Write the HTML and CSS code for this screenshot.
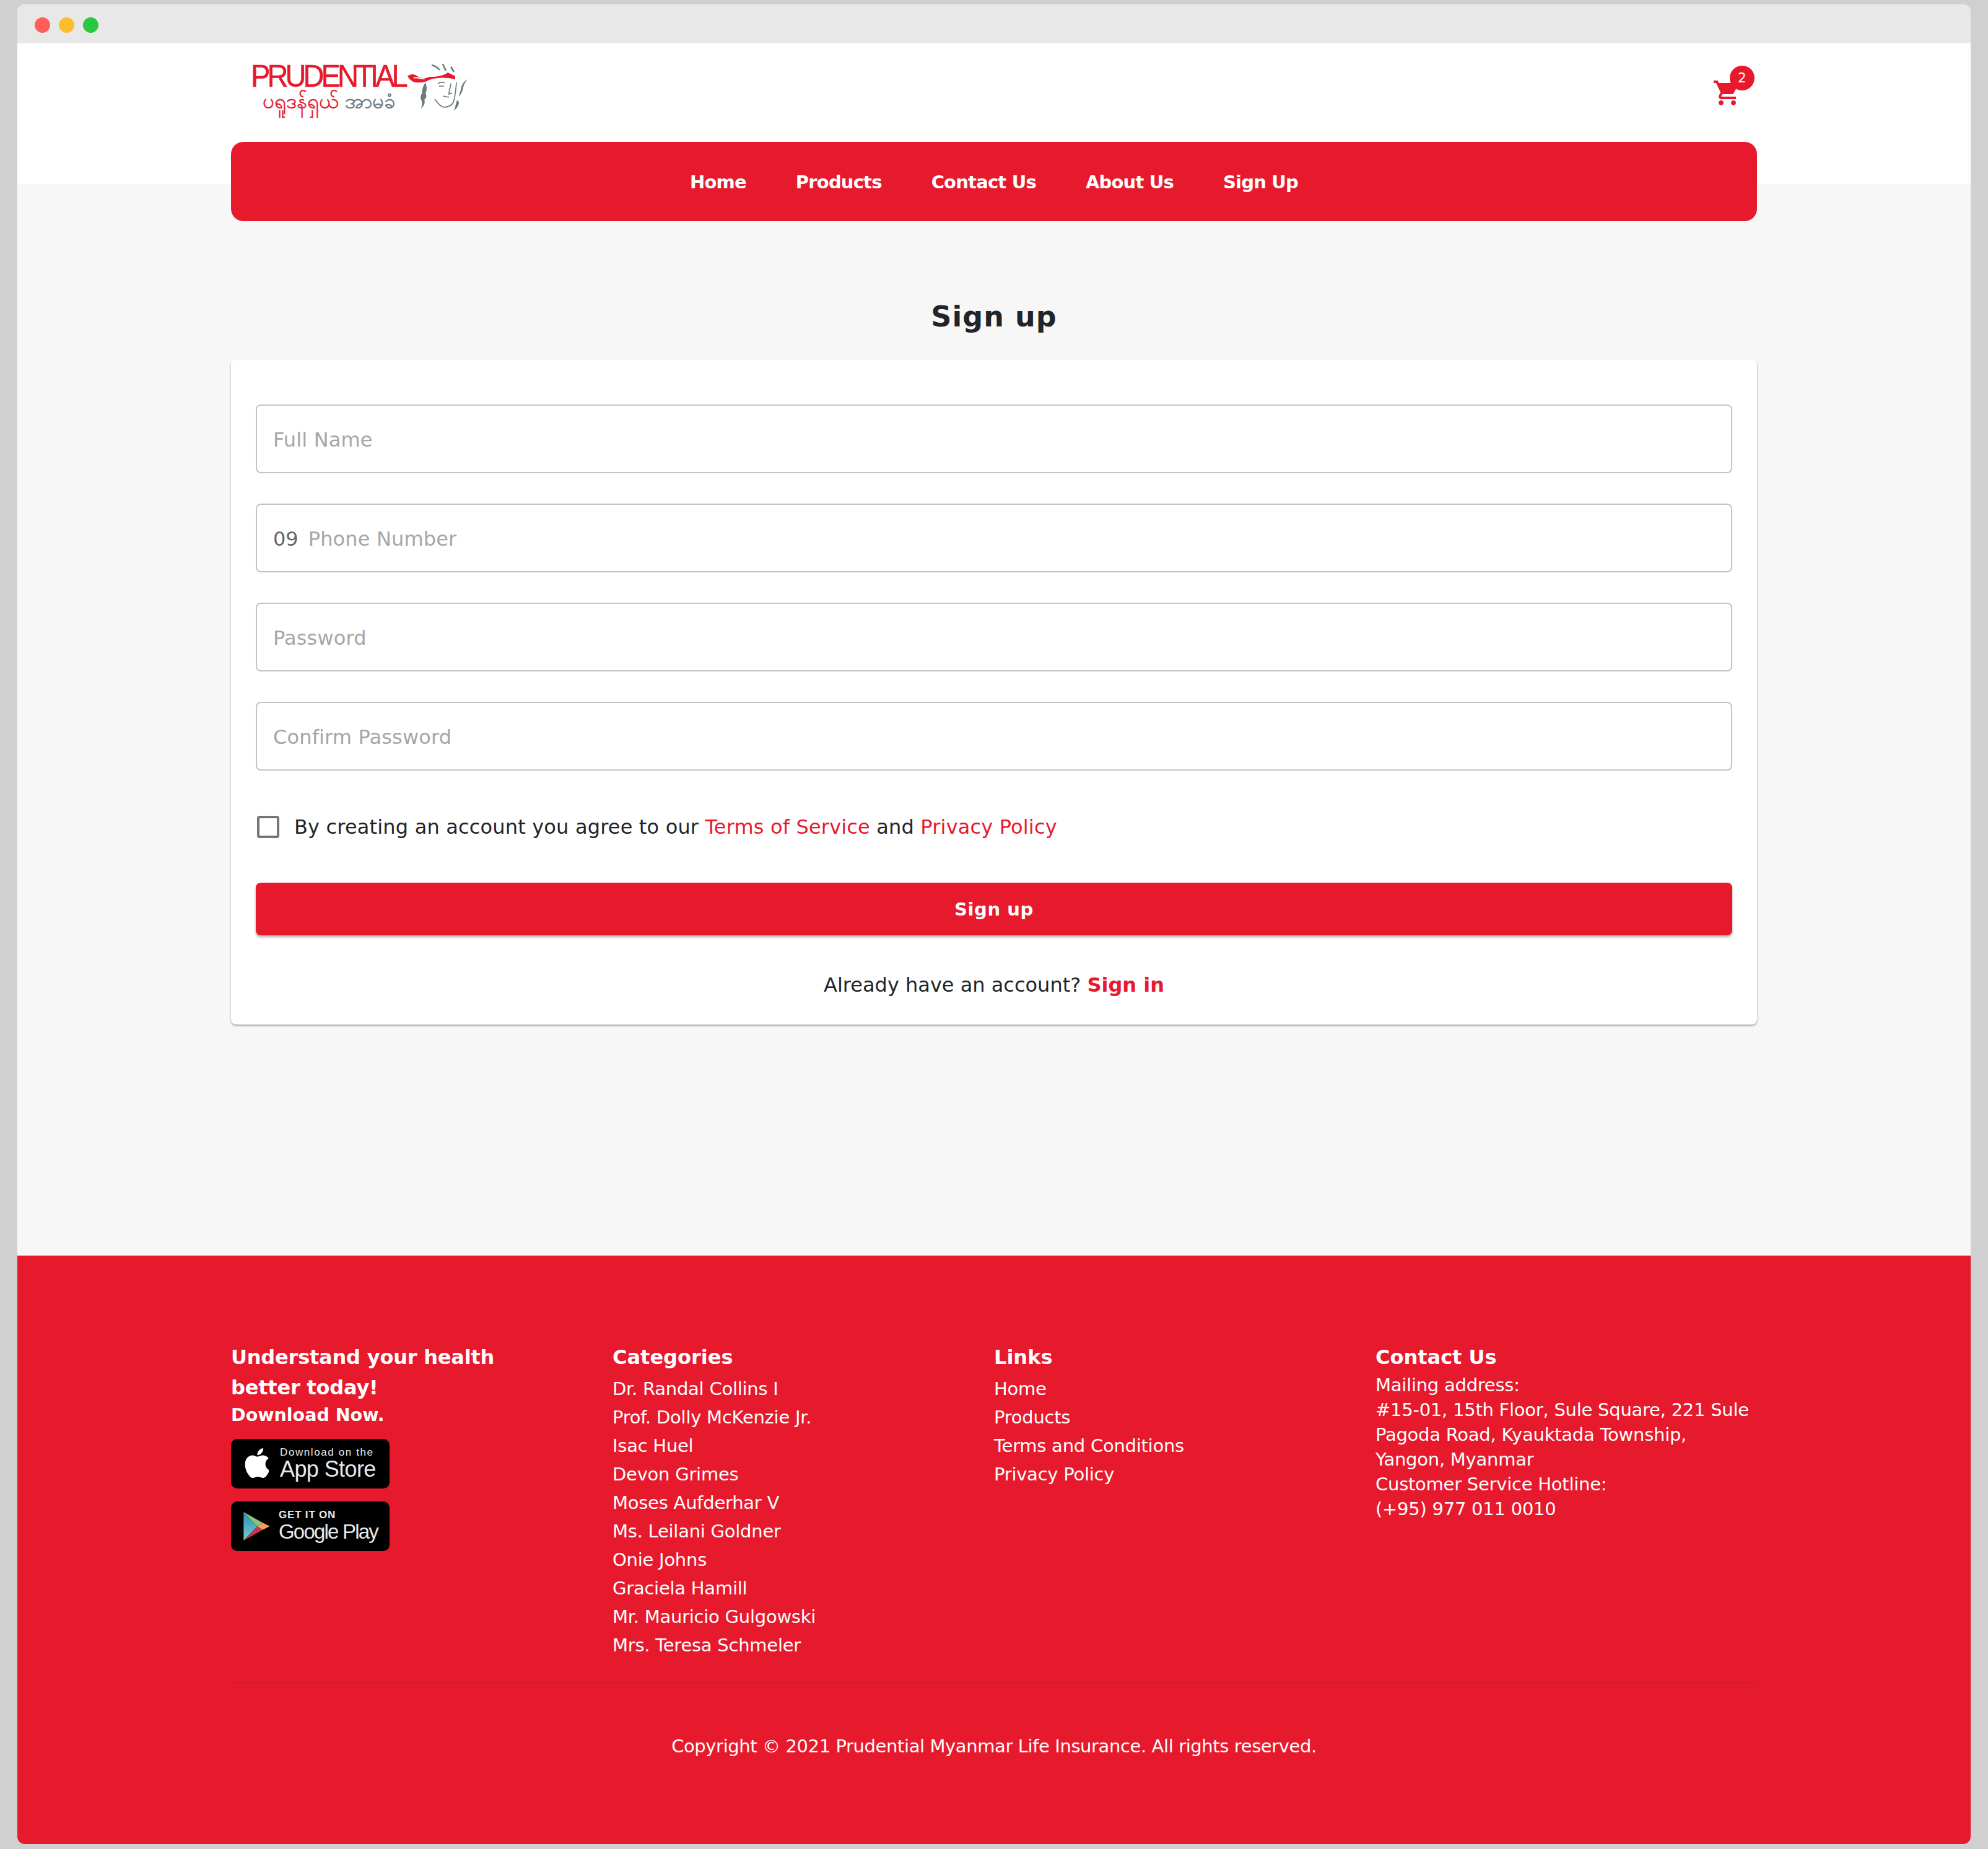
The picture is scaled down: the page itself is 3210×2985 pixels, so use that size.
FILE: index.html
```html
<!DOCTYPE html>
<html lang="en">
<head>
<meta charset="utf-8">
<title>Prudential Myanmar — Sign up</title>
<link rel="stylesheet" href="styles.css">
</head>
<body>
<div class="window">
  <div class="titlebar">
    <span class="dot dot-red"></span><span class="dot dot-yellow"></span><span class="dot dot-green"></span>
  </div>
  <header class="header">
    <div class="container header-row">
      <a class="logo">
        <span class="logo-words">
          <span class="logo-name">PRUDENTIAL</span>
          <span class="logo-mm"><span class="mm-red">ပရူဒန်ရှယ်</span> <span class="mm-grey">အာမခံ</span></span>
        </span>
        <svg class="logo-face" viewBox="0 0 100 82" aria-hidden="true">
          <path d="M1 20C6 16 12 16 17 20C24 24 30 24 36 21C48 22 62 18 66 14L78 20V25C62 21 48 22 36 26C30 30 22 31 14 30C8 29 4 25 1 20Z" fill="#e71a2d"/>
          <path d="M11 23C17 20 22 26 29 24" stroke="#fff" stroke-width="1.800" fill="none"/>
          <path d="M40 2C44 3 50 6 53 10M58 0C59 4 61 7 63 11M71 5L76 13" stroke="#6d7a80" stroke-width="2.600" fill="none"/>
          <path d="M50 32C54 29 58 29 61 31M52 36L60 36M71 32C70 38 68 44 68 49L73 47M58 52L68 54M45 57C50 64 55 70 60 70C66 70 72 68 75 62C78 54 79 42 80 30" stroke="#6d7a80" stroke-width="1.700" fill="none"/>
          <path d="M30 30C26 36 24 42 25 47C22 50 21 55 24 60C25 64 24 68 23 72C28 68 30 62 28 58C31 56 33 52 30 48C32 44 33 38 30 30Z" fill="#6d7a80"/>
          <path d="M98 25C92 28 88 34 87 42C86 46 84 50 84 53C87 50 90 44 91 38C92 33 95 28 98 25ZM81 59C79 64 78 70 76 76C80 72 84 68 84 62C83 60 82 59 81 59Z" fill="#6d7a80"/>
        </svg>
      </a>
      <a class="cart">
        <svg class="cart-icon" viewBox="0 0 24 24" aria-hidden="true"><path d="M7 18c-1.100 0-1.990.9-1.990 2S5.900 22 7 22s2-.9 2-2-.9-2-2-2zM1 2v2h2l3.600 7.590-1.350 2.450c-.160.280-.250.610-.250.960 0 1.100.9 2 2 2h12v-2H7.420c-.140 0-.250-.110-.250-.250l.030-.120.900-1.630h7.450c.750 0 1.410-.410 1.750-1.030l3.580-6.490A1 1 0 0 0 20 4H5.210l-.940-2H1zM17 18c-1.100 0-1.990.9-1.990 2s.890 2 1.990 2 2-.9 2-2-.9-2-2-2z"/></svg>
        <span class="cart-badge">2</span>
      </a>
    </div>
  </header>
  <main class="main">
    <div class="container">
      <nav class="nav">
        <a>Home</a><a>Products</a><a>Contact Us</a><a>About Us</a><a>Sign Up</a>
      </nav>
      <h1 class="page-title">Sign up</h1>
      <form class="card">
        <label class="field"><span class="placeholder">Full Name</span></label>
        <label class="field"><span class="prefix">09</span><span class="placeholder">Phone Number</span></label>
        <label class="field"><span class="placeholder">Password</span></label>
        <label class="field"><span class="placeholder">Confirm Password</span></label>
        <div class="agree">
          <span class="checkbox"></span>
          <span>By creating an account you agree to our <a class="link">Terms of Service</a> and <a class="link">Privacy Policy</a></span>
        </div>
        <button class="submit" type="button">Sign up</button>
        <p class="signin">Already have an account? <a class="link-bold">Sign in</a></p>
      </form>
    </div>
  </main>
  <footer class="footer">
    <div class="container">
      <div class="footer-cols">
        <div class="col">
          <h3 class="col-head tagline">Understand your health better today!</h3>
          <p class="download">Download Now.</p>
          <a class="badge">
            <svg class="apple" viewBox="1.500 1.800 21 25.600" aria-hidden="true"><path d="M19.700 14.800c0-3.100 2.500-4.600 2.600-4.700-1.400-2.100-3.700-2.400-4.500-2.400-1.900-.2-3.700 1.100-4.700 1.100-1 0-2.500-1.100-4.100-1.100-2.100 0-4 1.200-5.100 3.100-2.200 3.800-.6 9.400 1.600 12.500 1 1.500 2.300 3.200 3.900 3.100 1.600-.1 2.200-1 4.100-1 1.900 0 2.500 1 4.100 1 1.700 0 2.800-1.500 3.800-3 1.200-1.700 1.700-3.400 1.700-3.500-.1 0-3.400-1.300-3.400-5.100zM16.600 5.700c.9-1 1.400-2.500 1.300-3.900-1.200.1-2.700.8-3.600 1.900-.8.900-1.500 2.400-1.300 3.800 1.400.1 2.700-.7 3.600-1.800z"/></svg>
            <span class="badge-text"><span class="badge-small apple-small">Download on the</span><span class="badge-big">App Store</span></span>
          </a>
          <a class="badge">
            <svg class="play" viewBox="0 0 46 50" aria-hidden="true">
              <defs><linearGradient id="playLeft" x1="0" y1="0" x2="0" y2="1"><stop offset="0" stop-color="#2f8fb0"/><stop offset="1" stop-color="#6fd0cf"/></linearGradient></defs>
              <path d="M1 1L24 25 1 49z" fill="url(#playLeft)"/>
              <path d="M1 1L33 19 24 25z" fill="#8cc47f"/>
              <path d="M1 49L33 31 24 25z" fill="#c8334f"/>
              <path d="M33 19L45 25 33 31 24 25z" fill="#f5a05a"/>
            </svg>
            <span class="badge-text badge-text-play"><span class="badge-small play-small">GET IT ON</span><span class="badge-big google">Google Play</span></span>
          </a>
        </div>
        <div class="col">
          <h3 class="col-head">Categories</h3>
          <ul class="list">
            <li>Dr. Randal Collins I</li><li>Prof. Dolly McKenzie Jr.</li><li>Isac Huel</li><li>Devon Grimes</li><li>Moses Aufderhar V</li><li>Ms. Leilani Goldner</li><li>Onie Johns</li><li>Graciela Hamill</li><li>Mr. Mauricio Gulgowski</li><li>Mrs. Teresa Schmeler</li>
          </ul>
        </div>
        <div class="col">
          <h3 class="col-head">Links</h3>
          <ul class="list">
            <li>Home</li><li>Products</li><li>Terms and Conditions</li><li>Privacy Policy</li>
          </ul>
        </div>
        <div class="col">
          <h3 class="col-head">Contact Us</h3>
          <p class="contact">Mailing address:<br>#15-01, 15th Floor, Sule Square, 221 Sule Pagoda Road, Kyauktada Township, Yangon, Myanmar<br>Customer Service Hotline:<br>(+95) 977 011 0010</p>
        </div>
      </div>
      <p class="copyright">Copyright © 2021 Prudential Myanmar Life Insurance. All rights reserved.</p>
    </div>
  </footer>
</div>
</body>
</html>
```
FILE: styles.css
```css
* { box-sizing: border-box; }
html, body { margin: 0; padding: 0; }
body {
  width: 3210px;
  height: 2985px;
  background: #d0d0d0;
  padding: 7px 28px 8px;
  font-family: "DejaVu Sans", sans-serif;
  font-size: 32px;
  color: #212529;
  overflow: hidden;
}
.window {
  height: 2970px;
  border-radius: 12px;
  overflow: hidden;
  display: flex;
  flex-direction: column;
  background: #f7f7f7;
}
.titlebar {
  height: 63px;
  background: #e8e8e8;
  display: flex;
  align-items: center;
  gap: 14px;
  padding: 3px 0 0 28px;
  flex: none;
}
.dot { width: 25px; height: 25px; border-radius: 50%; }
.dot-red { background: #ff5f57; }
.dot-yellow { background: #ffbd2e; }
.dot-green { background: #28c840; }
.container { width: 2464px; margin: 0 auto; }
.header { height: 227px; background: #fff; flex: none; }
.header-row {
  display: flex;
  justify-content: space-between;
  align-items: flex-start;
  padding: 33px 0 0 35px;
}
.logo { display: flex; align-items: flex-start; width: 349px; height: 82px; }
.logo-words { display: flex; flex-direction: column; width: 249px; flex: none; }
.logo-name {
  font-family: "Liberation Sans", sans-serif;
  font-size: 50px;
  line-height: 44px;
  color: #e71a2d;
  letter-spacing: -5.200px;
  white-space: nowrap;
  margin: -2px 0 0 -3px;
  transform: scaleX(.94);
  transform-origin: left center;
  -webkit-text-stroke: .5px #e71a2d;
}
.logo-mm {
  font-family: "Noto Sans", "DejaVu Sans", sans-serif;
  font-size: 33px;
  line-height: 36px;
  padding-left: 16px;
  white-space: nowrap;
  -webkit-text-stroke: .5px currentColor;
}
.mm-red { color: #e71a2d; }
.mm-grey { color: #6d7a80; }
.logo-face { width: 100px; height: 82px; flex: none; }
.cart { position: relative; display: block; width: 48px; height: 48px; margin: 23px 24px 0 0; }
.cart-icon { width: 48px; height: 48px; fill: #e71a2d; display: block; }
.cart-badge {
  position: absolute;
  left: 28px;
  top: -20px;
  width: 40px;
  height: 40px;
  border-radius: 50%;
  background: #e71a2d;
  color: #fff;
  font-size: 21px;
  line-height: 40px;
  text-align: center;
}
.main { flex: 1; }
.nav {
  height: 128px;
  margin-top: -68px;
  padding-top: 2px;
  background: #e71a2d;
  border-radius: 20px;
  display: flex;
  justify-content: center;
  align-items: center;
  gap: 80px;
  position: relative;
  color: #fff;
  font-size: 29px;
  font-weight: 700;
  letter-spacing: -.800px;
}
.page-title {
  margin: 122px 0 38px;
  text-align: center;
  font-size: 46px;
  line-height: 64px;
  font-weight: 700;
  letter-spacing: 1px;
  color: #212529;
}
.card {
  height: 1073px;
  background: #fff;
  border-radius: 8px;
  padding: 72px 40px 0;
  box-shadow: 0 2px 3px rgba(0,0,0,.35);
  display: flex;
  flex-direction: column;
}
.field {
  height: 111px;
  border: 2px solid #c4c4c4;
  border-radius: 8px;
  margin-bottom: 49px;
  padding: 2px 26px 0;
  display: flex;
  align-items: center;
  gap: 16px;
  flex: none;
}
.placeholder { color: #a6a6a6; letter-spacing: .150px; }
.prefix { color: #666; }
.agree { display: flex; align-items: center; gap: 24px; margin: 24px 0 0 2px; height: 36px; color: #212529; letter-spacing: .170px; }
.checkbox { width: 36px; height: 36px; border: 4px solid #757575; border-radius: 4px; flex: none; }
.link { color: #e71a2d; }
.submit {
  margin-top: 72px;
  height: 85px;
  border: 0;
  border-radius: 8px;
  background: #e71a2d;
  color: #fff;
  font: 700 29px "DejaVu Sans", sans-serif;
  letter-spacing: .600px;
  box-shadow: 0 3px 4px rgba(0,0,0,.3);
  flex: none;
}
.signin { margin: 58px 0 0; text-align: center; line-height: 44px; }
.link-bold { color: #e71a2d; font-weight: 700; }
.footer { height: 950px; background: #e71a2d; color: #fff; flex: none; padding-top: 140px; }
.footer-cols {
  display: grid;
  grid-template-columns: repeat(4, 616px);
  height: 550px;
  border-bottom: 1px solid #d0182a;
}
.col-head { margin: 0; font-size: 32px; line-height: 49px; font-weight: 700; }
.tagline { width: 480px; letter-spacing: -.200px; }
.download { margin: 0 0 18px; font-size: 28.500px; line-height: 40px; font-weight: 700; }
.badge {
  display: flex;
  align-items: center;
  width: 256px;
  height: 80px;
  border-radius: 10px;
  background: #000;
  margin-bottom: 21px;
  padding-left: 20px;
}
.apple { width: 41px; height: 50px; fill: #fff; flex: none; }
.play { width: 45px; height: 48px; flex: none; margin-left: -1px; }
.badge-text { display: flex; flex-direction: column; margin-left: 18px; color: #e8e8e8; font-family: "Liberation Sans", sans-serif; }
.badge-text-play { margin-left: 13px; }
.badge-small { font-size: 17px; line-height: 18px; white-space: nowrap; }
.apple-small { letter-spacing: 1.600px; }
.play-small { font-weight: 700; letter-spacing: .800px; }
.badge-big { font-size: 36px; line-height: 36px; white-space: nowrap; letter-spacing: -.600px; }
.google { font-size: 33px; letter-spacing: -1.800px; }
.list { list-style: none; margin: 3px 0 0; padding: 0; font-size: 29px; line-height: 46px; letter-spacing: -.250px; }
.contact { margin: 0; font-size: 29px; line-height: 40px; width: 616px; letter-spacing: -.250px; }
.copyright { margin: 82px 0 0; text-align: center; font-size: 29px; line-height: 40px; letter-spacing: -.400px; }
```
